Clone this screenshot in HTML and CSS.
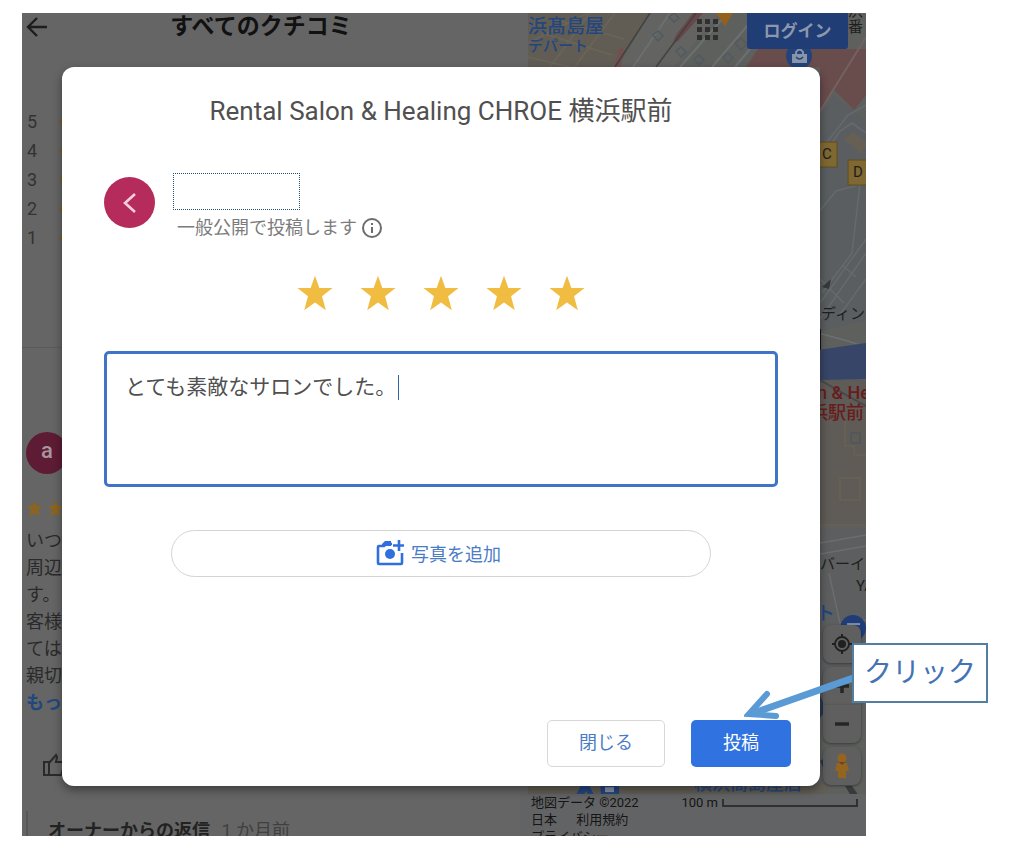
FILE: index.html
```html
<!DOCTYPE html>
<html lang="ja">
<head>
    <meta charset="UTF-8" />
    <meta name="viewport" content="width=device-width, initial-scale=1.0" />
    <title>クチコミの投稿</title>
    <link rel="stylesheet" href="styles.css">
</head>
<body>

<svg class="defs" aria-hidden="true">
    <symbol id="star" viewBox="0 0 24 24"><path d="M12 0.500l2.900 8.100 8.800.1-7 5.500 2.500 9.300-7.200-5.200-7.200 5.200 2.500-9.300L.3 8.700l8.800-.1z"/></symbol>
</svg>

<div class="screen">

    <!-- Pannello recensioni -->
    <section class="reviews">
        <header class="reviews-header">
            <button class="back" aria-label="戻る">
                <svg width="22" height="22" viewBox="0 0 22 22"><path d="M21 11H2M11 2l-9 9 9 9" fill="none" stroke="#1d1d1d" stroke-width="2.400"/></svg>
            </button>
            <h2>すべてのクチコミ</h2>
        </header>
        <ul class="histogram">
            <li>5<i></i></li>
            <li>4<i></i></li>
            <li>3<i></i></li>
            <li>2<i></i></li>
            <li>1<i></i></li>
        </ul>
        <article class="review">
            <div class="reviewer">a</div>
            <div class="review-stars">
                <svg><use href="#star"/></svg>
                <svg><use href="#star"/></svg>
            </div>
            <p>いつ<br>周辺<br>す。<br>客様<br>ては<br>親切<br><a href="#">もっ</a></p>
            <button class="like" aria-label="いいね">
                <svg width="24" height="24" viewBox="0 0 24 24"><path d="M2 9h5v13H2zM7 10l7-8 1 2-1 5h8v4l-3 9H7z" fill="none" stroke="#2a2a2a" stroke-width="2"/></svg>
            </button>
            <div class="reply"><b>オーナーからの返信</b> <span>1 か月前</span></div>
        </article>
    </section>

    <!-- Mappa -->
    <section class="map">
        <svg class="map-canvas" viewBox="0 0 346 823" preserveAspectRatio="xMaxYMin slice">
            <rect x="8" width="338" height="823" fill="#5e605e"/>
            <!-- strade in alto -->
            <path d="M8 0h122L98 54H8z" fill="#615d55"/>
            <g stroke="#6a6557" stroke-width="1.500" fill="none">
                <path d="M8 44l84 20M30 54L70 0M50 60l45-60M8 30l60-30M34 6l70 20M22 20l70 22"/>
            </g>
            <path d="M130 0h70l-46 54H98z" fill="#636461"/>
            <path d="M183 0h-10l-17 22-3 8 5-2z" fill="#694748"/>
            <path d="M94 54l5-18 5-2-3 20z" fill="#754f50"/>
            <g fill="none" stroke="#3f4341" stroke-width="1.500">
                <path d="M130 0L95 54M176 0l-40 54"/>
            </g>
            <g fill="none" stroke="#6b6f70" stroke-width="2">
                <path d="M150 0l-37 54M204 4l-44 50M228 12l-36 42M240 24l-25 30"/>
            </g>
            <g fill="none" stroke="#515a60" stroke-width="1.500">
                <path d="M133 22l5-4 5 5-5 5zM149 4l5-4 5 5-5 4zM156 38l5-4 5 5-5 5zM174 46l5-4 5 5-5 5zM203 44l5-4 5 5-5 5zM215 30l6-5 6 6-6 6z"/>
            </g>
            <path d="M226 54l12-18h108v46l-12 15-20-20-14 20V54z" fill="#694c4c"/>
            <path d="M346 24l-46 74" stroke="#736261" stroke-width="2"/>
            <path d="M196 0h17l-8 13z" fill="#94601b"/>
            <g class="map-blue">
                <text x="8" y="20" class="label-l">浜髙島屋</text>
                <text x="8" y="38">デパート</text>
            </g>
            <text x="328" y="3" class="map-dark">浜</text>
            <text x="328" y="19" class="map-dark">番</text>
            <circle cx="279" cy="43" r="13" fill="#24437b"/>
            <path d="M272 41h15v9h-15z" fill="#8995a8"/>
            <path d="M276 41v-2q3.500-5 7 0v2" fill="none" stroke="#8995a8" stroke-width="2"/>
            <path d="M276 44q3.500 4 7 0" fill="none" stroke="#24437b" stroke-width="1.500"/>

            <!-- lato destro -->
            <path d="M300 102l14-20 32 26v200l-46 10z" fill="#5a5e60"/>
            <path d="M324 126l9-7 16 12-8 10z" fill="#665f54"/>
            <g fill="none" stroke="#656a6c" stroke-width="1.500">
                <path d="M298 150l22-32 12-8 14 10M300 138l28-36 18-10M298 200l18-22 30-8M300 290l46-64M300 306l46-66M300 266l24 24M322 252l14 12M318 304l28-38M340 170l-8 70-30 40"/>
            </g>
            <rect x="296" y="129" width="21" height="25" fill="#806832" stroke="#644c1d"/>
            <rect x="328" y="147" width="22" height="25" fill="#806832" stroke="#644c1d"/>
            <text x="302" y="146" class="map-dark">C</text>
            <text x="333" y="164" class="map-dark">D</text>
            <path d="M302 274l9-8-2 10z" fill="#36393a"/>
            <text x="301" y="306" class="map-dark">ディング</text>
            <path d="M298 320l30 8 18 6" fill="none" stroke="#6d7071" stroke-width="1.500"/>
            <path d="M299 316v26" stroke="#171717" stroke-width="4"/>
            <path d="M298 337l48-7v36l-46 1z" fill="#374568"/>
            <rect x="300" y="367" width="46" height="146" fill="#5f5b57"/>
            <path d="M300 367l46 26" stroke="#464a4b" stroke-width="2"/>
            <g class="map-red">
                <text x="297" y="386">n &amp; Healing</text>
                <text x="290" y="406">浜駅前</text>
            </g>
            <g fill="none" stroke="#6a6253" stroke-width="1.500">
                <path d="M325 408v25h9v9h12M320 465h20v22h-20zM300 512h46"/>
                <path d="M331 420h9v10h-9z" stroke="#50575b"/>
            </g>
            <rect x="300" y="515" width="46" height="180" fill="#5c5e5f"/>
            <g fill="none" stroke="#6b6d6e" stroke-width="1.500">
                <path d="M300 530l46-8M300 541l46-8M309 560l12 55 25-8"/>
            </g>
            <text x="300" y="556" class="map-dark">バーイ</text>
            <text x="336" y="578" class="map-dark">YA</text>
            <circle cx="333" cy="615" r="13" fill="#203d78"/>
            <path d="M327 611h13" stroke="#8290ac" stroke-width="2"/>
            <path d="M325 773l12 20h9l-14-20z" fill="#383b3b"/>
            <path d="M300 682l6 15-6 8zM300 748l8-5-4 14z" fill="#293b56"/>
            <rect x="8" y="770" width="300" height="12" fill="#615e56"/>
            <g class="map-blue">
                <text x="296" y="607" class="label-l">ト</text>
                <text x="174" y="777" class="label-l label-store">横浜髙島屋店</text>
                <path d="M62 770h6l6 12h-6l-2-4-2 4h-8zM80 770h19v12H81z"/>
                <path d="M85 774h9v5h-9z" fill="#8995a8"/>
            </g>
        </svg>

        <div class="map-top">
            <button class="apps" aria-label="アプリ">
                <svg width="22" height="22" viewBox="0 0 22 22" fill="#303030"><path d="M0 0h5v5H0zM8 0h5v5H8zM16 0h5v5h-5zM0 8h5v5H0zM8 8h5v5H8zM16 8h5v5h-5zM0 16h5v5H0zM8 16h5v5H8zM16 16h5v5h-5z"/></svg>
            </button>
            <button class="login">ログイン</button>
        </div>

        <div class="map-controls">
            <button aria-label="現在地">
                <svg width="20" height="20" viewBox="0 0 20 20"><circle cx="10" cy="10" r="7" fill="none" stroke="#202020" stroke-width="1.800"/><circle cx="10" cy="10" r="4" fill="#202020"/><path d="M10 0v3M10 17v3M0 10h3M17 10h3" stroke="#202020" stroke-width="2"/></svg>
            </button>
            <div class="zoom">
                <button aria-label="拡大"><svg width="14" height="14" viewBox="0 0 14 14"><path d="M7 0v14M0 7h14" stroke="#262626" stroke-width="3.500"/></svg></button>
                <button aria-label="縮小"><svg width="14" height="14" viewBox="0 0 14 14"><path d="M0 7h14" stroke="#262626" stroke-width="3.500"/></svg></button>
            </div>
            <button aria-label="ストリートビュー">
                <svg width="16" height="26" viewBox="0 0 16 26" fill="#946421"><circle cx="8" cy="5" r="4.500"/><path d="M3 10h10l2 8h-3v7H4v-7H1z"/><path d="M5 9l3 3 3-3z" fill="#7c3b19"/></svg>
            </button>
        </div>

        <footer class="map-footer">
            <div class="legal">地図データ ©2022<br>日本 <a href="#">利用規約</a><br><a href="#" class="privacy">プライバシー</a></div>
            <div class="scale">100 m<span></span></div>
        </footer>
    </section>

    <!-- Finestra per scrivere la recensione -->
    <form class="dialog">
        <h1>Rental Salon &amp; Healing CHROE 横浜駅前</h1>
        <div class="author">
            <div class="avatar">
                <svg width="14" height="20" viewBox="0 0 14 20"><path d="M12 1L2 10l10 9" fill="none" stroke="#f6cfdb" stroke-width="2.600"/></svg>
            </div>
            <div class="author-info">
                <input type="text" class="author-name" aria-label="名前">
                <div class="public">一般公開で投稿します
                    <svg width="22" height="22" viewBox="0 0 22 22"><circle cx="11" cy="11" r="9" fill="none" stroke="#6c6c6c" stroke-width="2"/><path d="M11 10v6M11 6v2" stroke="#6c6c6c" stroke-width="2"/></svg>
                </div>
            </div>
        </div>
        <div class="rating">
            <button type="button" aria-label="1"><svg><use href="#star"/></svg></button>
            <button type="button" aria-label="2"><svg><use href="#star"/></svg></button>
            <button type="button" aria-label="3"><svg><use href="#star"/></svg></button>
            <button type="button" aria-label="4"><svg><use href="#star"/></svg></button>
            <button type="button" aria-label="5"><svg><use href="#star"/></svg></button>
        </div>
        <div class="comment">
            <textarea aria-label="クチコミ">とても素敵なサロンでした。</textarea>
            <span class="caret"></span>
        </div>
        <button type="button" class="add-photo">
            <svg width="28" height="26" viewBox="0 0 28 26"><path d="M16 4h-6L8 6H3q-1 0-1 1v16q0 1 1 1h22q1 0 1-1V13" fill="none" stroke="#2f70dc" stroke-width="2.600"/><path d="M6 4l3-3h6v5H6z" fill="#2f70dc"/><circle cx="14" cy="14" r="5" fill="#2f70dc"/><path d="M23 0v11M17 5.500h11" stroke="#2f70dc" stroke-width="2.600"/></svg>
            写真を追加
        </button>
        <div class="actions">
            <button type="button" class="close">閉じる</button>
            <button type="submit" class="submit">投稿</button>
        </div>
    </form>

    <!-- Indicazione "clicca qui" -->
    <svg class="arrow" width="112" height="50" viewBox="0 0 112 50"><path d="M112 6L7 43" fill="none" stroke="#5b9bd5" stroke-width="7"/><path d="M23 23L5 43l27 2" fill="none" stroke="#5b9bd5" stroke-width="6" stroke-linecap="round"/></svg>
    <div class="callout">クリック</div>
</div>

</body>
</html>
```
FILE: styles.css
```css
* {
    box-sizing: border-box;
}

body {
    margin: 0;
    background: #fff;
    font-family: Roboto, 'Noto Sans CJK JP', sans-serif;
    font-size: 18px;
    color: #505050;
}

button {
    font: inherit;
    padding: 0;
    border: 0;
    background: none;
}

svg {
    display: block;
}

.defs {
    position: absolute;
    width: 0;
    height: 0;
}

.screen {
    position: relative;
    display: grid;
    grid-template-columns: 59% 1fr;
    height: calc(100vh - 29px);
    margin: 13px 158px 16px 22px;
    background: #656565;
}

/* Recensioni */
.reviews {
    overflow: hidden;
    min-width: 0;
    color: #2a2a2a;
}

.reviews-header {
    display: flex;
    align-items: center;
    height: 28px;
    padding-left: 4px;
}

.reviews-header h2 {
    flex: 1;
    margin: 0 46px 0 0;
    text-align: center;
    font-size: 23px;
    line-height: 28px;
    color: #111;
}

.histogram {
    list-style: none;
    margin: 0;
    padding: 66px 0 95px 5px;
    border-bottom: 1px solid #5a5a5a;
    line-height: 29px;
    color: #333;
}

.histogram li {
    display: flex;
    align-items: center;
    gap: 23px;
}

.histogram i {
    width: 8px;
    height: 8px;
    border-radius: 4px;
    background: #805e24;
}

.review {
    padding: 84px 4px 0;
}

.reviewer {
    width: 42px;
    height: 42px;
    border-radius: 50%;
    background: #5d1c34;
    color: #a7969c;
    text-align: center;
    font-size: 22px;
    font-weight: 500;
    line-height: 38px;
}

.review-stars {
    display: flex;
    gap: 4px;
    margin: 26px 0 10px;
    fill: #8b651f;
}

.review-stars svg {
    width: 17px;
    height: 17px;
}

.review p {
    margin: 0;
    line-height: 27px;
    height: 192px;
}

.review p a {
    color: #20477f;
    font-weight: bold;
    text-decoration: none;
}

.like {
    display: block;
    margin: 34px 0 0 16px;
}

.reply {
    margin-top: 34px;
    padding-left: 20px;
    border-left: 2px solid #575757;
    line-height: 40px;
    color: #404040;
}

.reply b {
    margin-right: 7px;
    color: #222;
}

/* Mappa */
.map {
    position: relative;
    overflow: hidden;
    display: flex;
    flex-direction: column;
    justify-content: space-between;
}

.map-canvas {
    position: absolute;
    top: 0;
    left: 0;
    width: 100%;
    height: 100%;
    font-size: 15px;
}

.map-canvas .label-l {
    font-size: 19px;
}

.map-canvas .label-store {
    font-size: 18px;
}

.map-blue {
    fill: #24467f;
    font-weight: 500;
}

.map-dark {
    fill: #1e1e1e;
}

.map-red {
    fill: #681c1c;
    font-size: 18px;
    font-weight: 500;
}

.map-top {
    position: relative;
    display: flex;
    justify-content: flex-end;
    align-items: flex-start;
    gap: 28px;
    padding-right: 18px;
}

.apps {
    margin-top: 6px;
}

.login {
    width: 101px;
    height: 36px;
    padding-bottom: 4px;
    border-radius: 0 0 3px 3px;
    background: #203d76;
    color: #8b98ac;
    font-weight: bold;
    font-size: 17px;
}

.map-controls {
    position: absolute;
    right: 5px;
    bottom: 51px;
    display: flex;
    flex-direction: column;
    gap: 4px;
    width: 38px;
}

.map-controls button {
    display: flex;
    align-items: center;
    justify-content: center;
    width: 100%;
    height: 38px;
    border-radius: 8px;
    background: #5f5f5f;
    box-shadow: 0 1px 3px rgba(0,0,0,0.4);
}

.map-controls .zoom button {
    border-radius: 8px 8px 0 0;
}

.map-controls .zoom button + button {
    border-radius: 0 0 8px 8px;
}

.map-footer {
    position: relative;
    display: flex;
    justify-content: space-between;
    height: 42px;
    padding: 0 8px 0 11px;
    background: #626364;
    font-size: 13px;
    line-height: 17px;
    color: #151515;
}

.map-footer a {
    color: inherit;
    text-decoration: none;
}

.legal a {
    margin-left: 16px;
}

.legal .privacy {
    margin-left: 0;
}

.scale {
    display: flex;
    gap: 4px;
    height: 17px;
}

.scale span {
    width: 136px;
    height: 8px;
    margin-top: 5px;
    border: 2px solid #303030;
    border-top: 0;
}

/* Finestra */
.dialog {
    position: absolute;
    top: 54px;
    right: 46px;
    bottom: 50px;
    left: 40px;
    display: flex;
    flex-direction: column;
    padding: 26px 42px 19px;
    border-radius: 12px;
    background: #fff;
    box-shadow: 0 4px 10px rgba(0,0,0,0.4);
}

.dialog h1 {
    margin: 0;
    text-align: center;
    font-size: 26px;
    font-weight: 400;
    line-height: 36px;
}

.author {
    display: flex;
    gap: 18px;
    margin-top: 44px;
}

.avatar {
    display: flex;
    align-items: center;
    justify-content: center;
    width: 51px;
    height: 51px;
    margin-top: 4px;
    border-radius: 50%;
    background: #b52c5c;
}

.author-name {
    display: block;
    width: 127px;
    height: 37px;
    border: 1px dotted #1f4e79;
    background: #fff;
}

.public {
    display: flex;
    align-items: center;
    gap: 4px;
    padding-left: 4px;
    line-height: 36px;
    color: #7b7b7b;
}

.rating {
    display: flex;
    justify-content: center;
    gap: 27px;
    margin-top: 29px;
}

.rating svg {
    width: 36px;
    height: 36px;
    fill: #f0bd42;
}

.comment {
    position: relative;
    margin-top: 40px;
}

.comment textarea {
    display: block;
    width: 100%;
    height: 136px;
    padding: 18px;
    border: 3px solid #3f74c8;
    border-radius: 5px;
    outline: 0;
    resize: none;
    font: inherit;
    font-size: 21px;
    line-height: 30px;
    color: #505050;
}

/* cursore di testo dopo l'ultima lettera */
.caret {
    position: absolute;
    top: 24px;
    left: 294px;
    width: 1px;
    height: 25px;
    background: #2f62a8;
}

.add-photo {
    display: flex;
    align-items: center;
    justify-content: center;
    gap: 7px;
    width: 80%;
    height: 47px;
    margin: 43px auto 0;
    padding: 0 5px 2px 0;
    border: 1px solid #d4d4d4;
    border-radius: 24px;
    color: #4a7cc6;
}

.actions {
    display: flex;
    justify-content: flex-end;
    gap: 26px;
    margin: auto -13px 0 0;
}

.actions button {
    height: 47px;
    padding-bottom: 5px;
    border-radius: 5px;
}

.close {
    width: 118px;
    border: 1px solid #d8d8d8;
    color: #4a7cc6;
}

.submit {
    width: 100px;
    background: #3072e0;
    color: #fff;
}

/* Freccia e etichetta */
.arrow {
    position: absolute;
    right: 10px;
    bottom: 115px;
}

.callout {
    position: absolute;
    right: -122px;
    bottom: 133px;
    width: 136px;
    height: 60px;
    border: 2px solid #527f9f;
    background: #fff;
    color: #4472b4;
    text-align: center;
    font-size: 28px;
    font-weight: 400;
    line-height: 56px;
}
```
